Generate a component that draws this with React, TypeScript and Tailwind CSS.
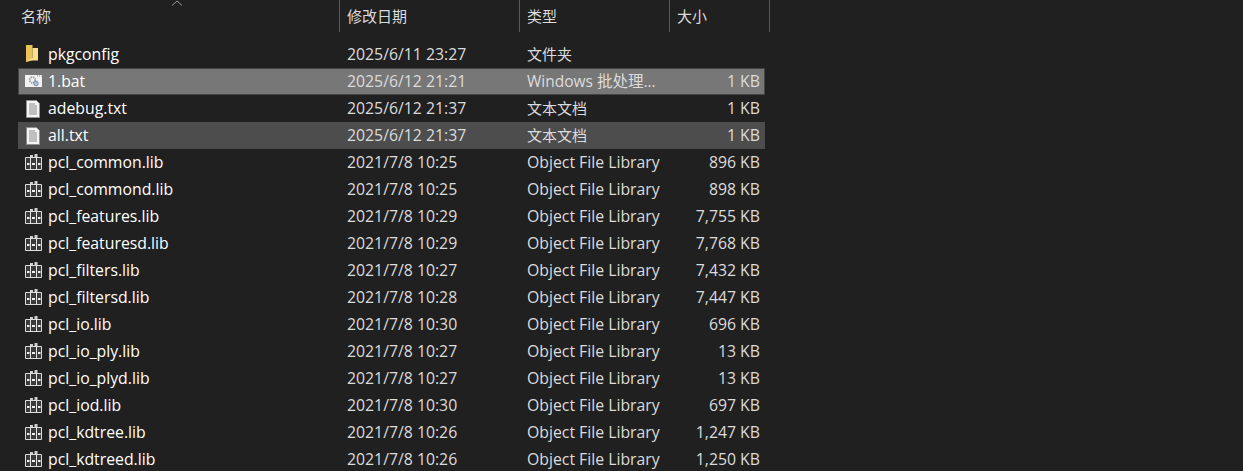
const FONT = "font-['Segoe_UI','Open_Sans','Noto_Sans','Noto_Sans_CJK_SC',sans-serif]"

type Row = {
  name: string
  date: string
  type: string
  size?: string
  icon: 'folder' | 'bat' | 'txt' | 'lib'
  state?: 'selected' | 'hover'
}

const rows: Row[] = [
  { name: 'pkgconfig', date: '2025/6/11 23:27', type: '文件夹', icon: 'folder' },
  { name: '1.bat', date: '2025/6/12 21:21', type: 'Windows 批处理...', size: '1 KB', icon: 'bat', state: 'selected' },
  { name: 'adebug.txt', date: '2025/6/12 21:37', type: '文本文档', size: '1 KB', icon: 'txt' },
  { name: 'all.txt', date: '2025/6/12 21:37', type: '文本文档', size: '1 KB', icon: 'txt', state: 'hover' },
  { name: 'pcl_common.lib', date: '2021/7/8 10:25', type: 'Object File Library', size: '896 KB', icon: 'lib' },
  { name: 'pcl_commond.lib', date: '2021/7/8 10:25', type: 'Object File Library', size: '898 KB', icon: 'lib' },
  { name: 'pcl_features.lib', date: '2021/7/8 10:29', type: 'Object File Library', size: '7,755 KB', icon: 'lib' },
  { name: 'pcl_featuresd.lib', date: '2021/7/8 10:29', type: 'Object File Library', size: '7,768 KB', icon: 'lib' },
  { name: 'pcl_filters.lib', date: '2021/7/8 10:27', type: 'Object File Library', size: '7,432 KB', icon: 'lib' },
  { name: 'pcl_filtersd.lib', date: '2021/7/8 10:28', type: 'Object File Library', size: '7,447 KB', icon: 'lib' },
  { name: 'pcl_io.lib', date: '2021/7/8 10:30', type: 'Object File Library', size: '696 KB', icon: 'lib' },
  { name: 'pcl_io_ply.lib', date: '2021/7/8 10:27', type: 'Object File Library', size: '13 KB', icon: 'lib' },
  { name: 'pcl_io_plyd.lib', date: '2021/7/8 10:27', type: 'Object File Library', size: '13 KB', icon: 'lib' },
  { name: 'pcl_iod.lib', date: '2021/7/8 10:30', type: 'Object File Library', size: '697 KB', icon: 'lib' },
  { name: 'pcl_kdtree.lib', date: '2021/7/8 10:26', type: 'Object File Library', size: '1,247 KB', icon: 'lib' },
  { name: 'pcl_kdtreed.lib', date: '2021/7/8 10:26', type: 'Object File Library', size: '1,250 KB', icon: 'lib' },
]

const FileIcon = ({ icon }: { icon: Row['icon'] }) => {
  if (icon === 'folder') {
    return (
      <svg width="12" height="17" viewBox="0 0 12 17" className="mt-[-2px] ml-[-3px] block">
        <path d="M0 0h6.500v15L1 17H0z" fill="#e9c25a" />
        <path d="M6.500 3H12v12.500H1L6.500 13z" fill="#fcdf8c" />
      </svg>
    )
  }
  if (icon === 'bat') {
    return (
      <svg width="17" height="12" viewBox="0 0 17 12" className="mt-[-2px] block">
        <rect width="17" height="12" fill="#f2f2f2" />
        <path d="M12 1h1M14 1h1M16 1h.500" stroke="#8a8a8a" />
        <circle cx="7.500" cy="5" r="2.800" fill="none" stroke="#9a9a9a" strokeWidth="1.800" strokeDasharray="1.400 0.800" />
        <circle cx="11" cy="8.500" r="2.300" fill="#a5c3dc" stroke="#6d7f98" strokeWidth="0.800" />
      </svg>
    )
  }
  if (icon === 'txt') {
    return (
      <svg width="14" height="18" viewBox="0 0 14 18" className="ml-[-1px] block">
        <path d="M0.500 0.500h10l3 3v14h-13z" fill="#f4f4f4" stroke="#8f8f8f" />
        <path d="M3 4h6M3 6h8M3 8h8M3 10h8M3 12h8M3 14h8" stroke="#8a8a8a" strokeWidth="1" />
      </svg>
    )
  }
  return (
    <svg width="17" height="16" viewBox="0 0 17 16" className="mt-[-2px] block">
      <path d="M5 1h3v3H5zM9.500 0h3v4h-3z" fill="#cfcfcf" />
      <path d="M0.500 3.500h16v12h-16z" fill="#3a3a3a" stroke="#dcdcdc" />
      <path d="M5.500 3v13M11.500 3v13" stroke="#e6e6e6" />
      <path d="M2 5h2.500v9H2zM7 5h3v9H7zM13 5h2.500v9H13z" fill="#3c3c3c" />
      <path d="M2 10h2.500M7 10h3M13 10h2.500" stroke="#f0f0f0" strokeWidth="2" />
    </svg>
  )
}

const HeaderCell = ({ label, width, padding }: { label: string; width: string; padding: string }) => (
  <div className={`flex h-8 items-center border-r border-[#5a5a5a] ${width} ${padding}`}>{label}</div>
)

const FileRow = ({ row }: { row: Row }) => {
  const bg =
    row.state === 'selected'
      ? 'bg-[#777777] outline outline-1 -outline-offset-1 outline-[#444444]'
      : row.state === 'hover'
        ? 'bg-[#4d4d4d]'
        : ''
  // chinese type names sit at the header size, latin ones run a bit wider
  const typeSize = row.type.startsWith('Object')
    ? 'text-[15.8px]'
    : row.type.startsWith('Windows')
      ? 'text-[15.5px]'
      : 'text-[15px]'
  return (
    <div className={`flex h-[27px] w-[747px] items-center text-[15.8px] text-[#dcdcdc] ${bg}`}>
      <div className="flex w-[30px] shrink-0 justify-center pl-[1px]">
        <FileIcon icon={row.icon} />
      </div>
      <div className="w-[299px] shrink-0 truncate text-white">{row.name}</div>
      <div className="w-[180px] shrink-0">{row.date}</div>
      <div className={`w-[150px] shrink-0 whitespace-nowrap ${typeSize}`}>{row.type}</div>
      <div className="w-[83px] shrink-0 text-right">{row.size}</div>
    </div>
  )
}

export default function App() {
  return (
    <div className={`relative h-[471px] w-[1243px] overflow-hidden bg-[#202020] ${FONT}`}>
      <svg width="12" height="6" viewBox="0 0 12 6" className="absolute left-[171px] top-0">
        <path d="M1 5.500L6 1l5 4.500" fill="none" stroke="#9a9a9a" strokeWidth="1" />
      </svg>
      <div className="flex text-[15px] text-[#dcdcdc]">
        <HeaderCell label="名称" width="w-[340px]" padding="pl-[21px]" />
        <HeaderCell label="修改日期" width="w-[180px]" padding="pl-[7px]" />
        <HeaderCell label="类型" width="w-[150px]" padding="pl-[7px]" />
        <HeaderCell label="大小" width="w-[100px]" padding="pl-[7px]" />
      </div>
      <div className="ml-[18px] mt-[9px]">
        {rows.map((row) => (
          <FileRow key={row.name} row={row} />
        ))}
      </div>
    </div>
  )
}
